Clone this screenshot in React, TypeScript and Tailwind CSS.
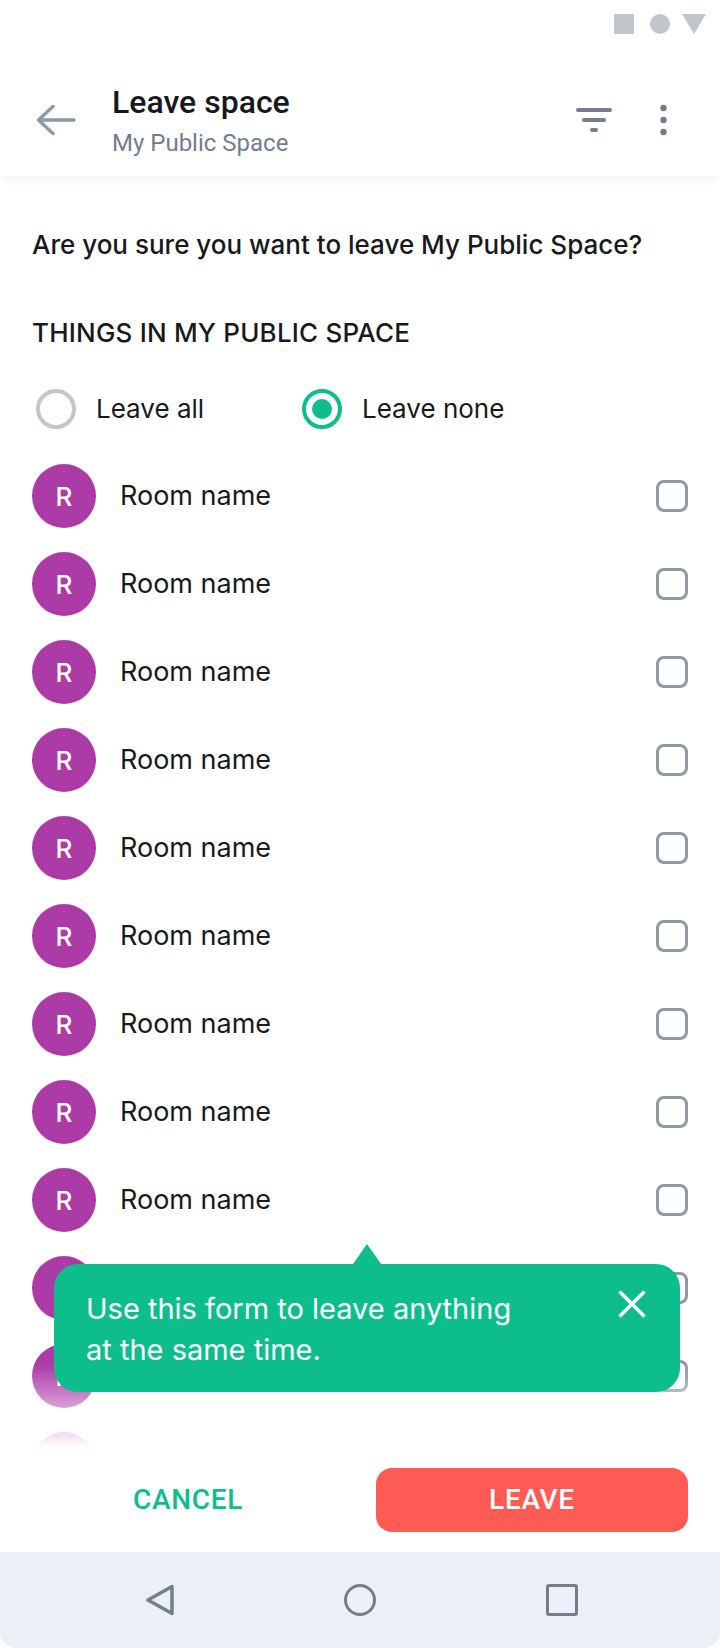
const rooms = Array.from({ length: 12 }, (_, i) => i);

function Radio({ label, checked }: { label: string; checked?: boolean }) {
  return (
    <div className="flex items-center gap-5">
      <div
        className={`flex h-10 w-10 items-center justify-center rounded-full border-[4px] ${
          checked ? "border-[#0dbd8b]" : "border-[#c1c6cd]"
        }`}
      >
        {checked && <div className="h-5 w-5 rounded-full bg-[#0dbd8b]" />}
      </div>
      <span className="text-[26px] leading-8 text-[#17191c]">{label}</span>
    </div>
  );
}

function RoomRow() {
  return (
    <div className="flex h-[88px] shrink-0 items-center">
      <div className="flex h-16 w-16 items-center justify-center rounded-full bg-[#ac3ba8] text-[26px] font-medium text-white">
        R
      </div>
      <span className="ml-6 flex-1 text-[27px] leading-8 text-[#17191c]">Room name</span>
      <div className="h-8 w-8 rounded-[8px] border-[3px] border-[#8d99a5]" />
    </div>
  );
}

export default function App() {
  return (
    <div className="relative flex h-[1648px] w-[720px] flex-col overflow-hidden bg-white font-['Inter',sans-serif]">
      {/* status bar */}
      <div className="flex h-16 shrink-0 items-start justify-end gap-4 pr-[14px] pt-[14px]">
        <div className="h-5 w-5 bg-[#c1c6cd]" />
        <div className="h-5 w-5 rounded-full bg-[#c1c6cd]" />
        <svg width="24" height="20" viewBox="0 0 24 20" className="-ml-1">
          <path d="M0 0h24L12 20z" fill="#c1c6cd" />
        </svg>
      </div>

      {/* header */}
      <div className="z-10 flex h-28 shrink-0 items-center bg-white pl-9 pr-[53px] shadow-[0_6px_8px_-2px_rgba(0,0,0,0.05)]">
        <svg width="40" height="32" viewBox="0 0 40 32" fill="none" className="shrink-0">
          <path
            d="M38 16H3M17 2.500 2.500 16 17 29.500"
            stroke="#8d99a5"
            strokeWidth="3.500"
            strokeLinecap="round"
            strokeLinejoin="round"
          />
        </svg>
        <div className="ml-[36px] flex flex-1 flex-col font-['Roboto',sans-serif]">
          <span className="text-[32px] leading-[40px] font-medium text-[#17191c]">Leave space</span>
          <span className="mt-[5px] text-[24px] leading-[32px] text-[#737d8c]">My Public Space</span>
        </div>
        <svg width="36" height="26" viewBox="0 0 36 26" fill="none" className="shrink-0">
          <path d="M2 3h32M8 13h20M16 23h4" stroke="#737d8c" strokeWidth="4" strokeLinecap="round" />
        </svg>
        <svg width="7" height="32" viewBox="0 0 7 32" className="ml-[48px] shrink-0" fill="#737d8c">
          <circle cx="3.500" cy="4" r="3.200" />
          <circle cx="3.500" cy="16" r="3.200" />
          <circle cx="3.500" cy="28" r="3.200" />
        </svg>
      </div>

      {/* content */}
      <div className="flex min-h-0 flex-1 flex-col px-8 pt-[53px]">
        <p className="text-[26px] leading-8 font-medium text-[#17191c]">
          Are you sure you want to leave My Public Space?
        </p>
        <h2 className="mt-[56px] text-[26px] leading-8 font-medium tracking-[0.2px] text-[#17191c]">
          THINGS IN MY PUBLIC SPACE
        </h2>
        <div className="mt-[40px] flex gap-[40px] pl-1">
          <div className="w-[226px]">
            <Radio label="Leave all" />
          </div>
          <Radio label="Leave none" checked />
        </div>
        <div className="relative mt-[23px] flex min-h-0 flex-1 flex-col overflow-hidden">
          {rooms.map((r) => (
            <RoomRow key={r} />
          ))}
          <div className="absolute inset-x-0 bottom-0 h-[84px] bg-gradient-to-b from-transparent to-white" />
        </div>
      </div>

      {/* footer */}
      <div className="flex h-[104px] shrink-0 items-center gap-8 px-8 font-['Roboto',sans-serif]">
        <button className="flex-1 text-[28px] font-medium tracking-[0.7px] text-[#0dbd8b]">CANCEL</button>
        <button className="h-16 w-[312px] rounded-2xl bg-[#ff5b55] text-[28px] font-medium tracking-[0.7px] text-white">
          LEAVE
        </button>
      </div>

      {/* nav bar */}
      <div className="flex h-24 shrink-0 items-center gap-[170px] rounded-b-2xl bg-[#ebeff7] pl-[146px]">
        <svg width="28" height="32" viewBox="0 0 28 32" fill="none">
          <path d="M26 2.500v27L2 16z" stroke="#737d8c" strokeWidth="3.500" strokeLinejoin="round" />
        </svg>
        <div className="h-8 w-8 rounded-full border-[3.500px] border-[#737d8c]" />
        <div className="h-8 w-8 rounded-[3px] border-[3.500px] border-[#737d8c]" />
      </div>

      {/* tooltip */}
      <div className="absolute left-[54px] top-[1264px] h-32 w-[626px] rounded-3xl bg-[#0dbd8b] pl-8 pt-[24px] pr-[80px] text-[29px] leading-[41px] text-white">
        <svg width="28" height="20" viewBox="0 0 28 20" className="absolute left-[299px] top-[-20px]">
          <path d="M14 0 28 20H0z" fill="#0dbd8b" />
        </svg>
        Use this form to leave anything
        <br />
        at the same time.
        <svg
          width="28"
          height="28"
          viewBox="0 0 28 28"
          fill="none"
          className="absolute left-[564px] top-[26px]"
        >
          <path d="M2.500 2.500l23 23M25.500 2.500l-23 23" stroke="#fff" strokeWidth="3.500" strokeLinecap="round" />
        </svg>
      </div>
    </div>
  );
}
